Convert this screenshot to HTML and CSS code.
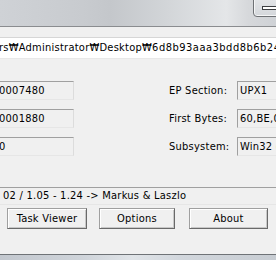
FILE: index.html
```html
<!DOCTYPE html>
<html>
<head>
<meta charset="utf-8">
<link rel="stylesheet" href="styles.css">
</head>
<body>
<div class="window">
  <div class="titlebar">
    <div class="minbtn"><span class="dash"></span></div>
  </div>
  <div class="client">
    <div class="pathbox">rs₩Administrator₩Desktop₩<span class="hex">6d8b93aaa3bdd8b6b24cc3e1b</span></div>
    <div class="fields">
      <div class="box lbox">0007480</div>
      <div class="label">EP Section:</div>
      <div class="box rbox">UPX1</div>
      <div class="box lbox">0001880</div>
      <div class="label">First Bytes:</div>
      <div class="box rbox">60,BE,00,90,42,00</div>
      <div class="box lbox">0</div>
      <div class="label">Subsystem:</div>
      <div class="box rbox">Win32 console</div>
    </div>
    <div class="result">02 / 1.05 - 1.24 -&gt; Markus &amp; Laszlo</div>
    <div class="buttons">
      <div class="btn b1">Task Viewer</div>
      <div class="btn b2">Options</div>
      <div class="btn b3">About</div>
    </div>
  </div>
  <div class="frame"></div>
</div>
</body>
</html>
```
FILE: styles.css
```css
html, body {
  margin: 0;
  padding: 0;
}
body {
  width: 276px;
  height: 260px;
  overflow: hidden;
  background: #f0f0f0;
  font-family: "DejaVu Sans Condensed", "DejaVu Sans", sans-serif;
  font-stretch: condensed;
  font-size: 11px;
  letter-spacing: 0.25px;
  color: #000;
}
.window {
  display: flex;
  flex-direction: column;
  width: 276px;
  height: 260px;
}
.titlebar {
  height: 26px;
  border-bottom: 1px solid #8a8c8f;
  background: linear-gradient(to right, #cfd2d6 0%, #c8cbcf 30%, #c4c7cb 40%, #d2d5d8 60%, #e4e6e8 82%, #d6d8db 90%, #cfd2d6 100%);
  display: flex;
  justify-content: flex-end;
  align-items: flex-start;
}
.minbtn {
  width: 23px;
  height: 16px;
  margin-top: -1px;
  margin-right: -2px;
  border: 1px solid #6e7175;
  border-radius: 0 0 0 4px;
  box-shadow: inset 1px 0 #f4f5f6, inset 0 -1px #f4f5f6;
  background: linear-gradient(#e2e4e7, #d4d7db);
  display: flex;
  align-items: flex-start;
}
.dash {
  display: block;
  width: 14px;
  height: 2px;
  margin: 6px 0 0 8px;
  border: 1px solid #3c3e42;
  background: #fff;
}
.client {
  flex: 1;
  display: flex;
  flex-direction: column;
  background: #f0f0f0;
}
.pathbox {
  margin: 10px -40px 0 -2px;
  height: 20px;
  line-height: 20px;
  padding-left: 1px;
  background: #fff;
  border-top: 1px solid #d6d6d6;
  border-bottom: 1px solid #e8e8e8;
  white-space: nowrap;
  overflow: hidden;
}
.hex {
  letter-spacing: 0.5px;
}
.fields {
  margin: 22px -60px 0 -1px;
  display: grid;
  grid-template-columns: 75px 163px 1fr;
  row-gap: 9px;
  align-items: center;
}
.box {
  height: 17px;
  line-height: 17px;
  border-top: 1px solid #a0a0a0;
  border-left: 1px solid #a0a0a0;
  border-right: 1px solid #dcdcdc;
  border-bottom: 1px solid #e6e6e6;
  background: #f0f0f0;
  white-space: nowrap;
  overflow: hidden;
}
.lbox {
  padding-left: 0;
  text-indent: -1px;
}
.rbox {
  padding-left: 2px;
}
.label {
  padding-left: 95px;
  white-space: nowrap;
}
.result {
  margin: 31px -20px 0 -1px;
  height: 16px;
  line-height: 15px;
  padding-left: 3px;
  border-top: 1px solid #a0a0a0;
  border-left: 1px solid #a0a0a0;
  border-bottom: 1px solid #e6e6e6;
  white-space: nowrap;
  overflow: hidden;
}
.buttons {
  margin-top: 3px;
  display: flex;
  padding-left: 7px;
}
.btn {
  height: 19px;
  line-height: 19px;
  text-align: center;
  border: 1px solid;
  border-color: #a0a0a0 #696969 #696969 #a0a0a0;
  box-shadow: inset 1px 1px #fff, inset -1px -1px #c8c8c8;
  background: #f0f0f0;
}
.b1 { width: 78px; }
.b2 { width: 74px; margin-left: 12px; }
.b3 { width: 77px; margin-left: 14px; }
.frame {
  height: 5px;
  border-top: 1px solid #6f7377;
  background: linear-gradient(to right, #c3c8cf 0%, #cfd4da 30%, #e0e4e8 48%, #d2d7dd 65%, #c8cdd3 100%);
}
```
